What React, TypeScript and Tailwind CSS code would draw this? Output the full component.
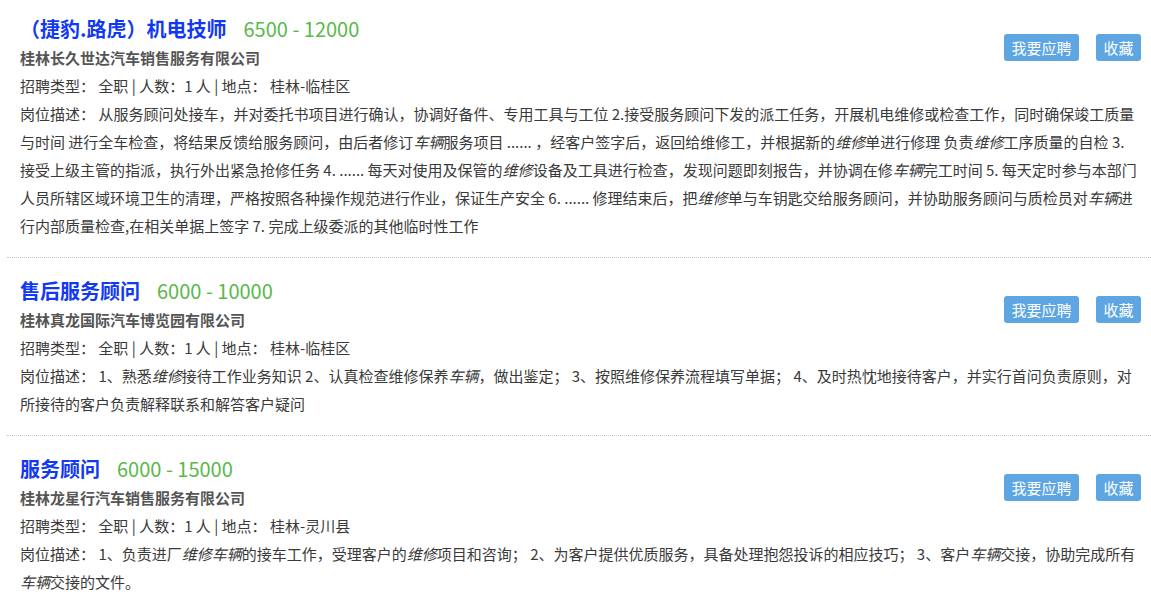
import React from "react";

type Seg = string | { em: string } | { br: true };

const jobs: {
  title: string;
  salary: string;
  company: string;
  place: string;
  desc: Seg[];
  first?: boolean;
}[] = [
  {
    title: "（捷豹.路虎）机电技师",
    salary: "6500 - 12000",
    company: "桂林长久世达汽车销售服务有限公司",
    place: "桂林-临桂区",
    first: true,
    desc: [
      "从服务顾问处接车，并对委托书项目进行确认，协调好备件、专用工具与工位 2.接受服务顾问下发的派工任务，开展机电维修或检查工作，同时确保竣工质量与时间 进行全车检查，将结果反馈给服务顾问，由后者修订",
      { em: "车辆" },
      "服务项目 ...... ，经客户签字后，返回给维修工，并根据新的",
      { em: "维修" },
      "单进行修理 负责",
      { em: "维修" },
      "工序质量的自检 3.",
      { br: true },
      "接受上级主管的指派，执行外出紧急抢修任务 4. ...... 每天对使用及保管的",
      { em: "维修" },
      "设备及工具进行检查，发现问题即刻报告，并协调在修",
      { em: "车辆" },
      "完工时间 5. 每天定时参与本部门",
      { br: true },
      "人员所辖区域环境卫生的清理，严格按照各种操作规范进行作业，保证生产安全 6. ...... 修理结束后，把",
      { em: "维修" },
      "单与车钥匙交给服务顾问，并协助服务顾问与质检员对",
      { em: "车辆" },
      "进",
      { br: true },
      "行内部质量检查,在相关单据上签字 7. 完成上级委派的其他临时性工作",
    ],
  },
  {
    title: "售后服务顾问",
    salary: "6000 - 10000",
    company: "桂林真龙国际汽车博览园有限公司",
    place: "桂林-临桂区",
    desc: [
      "1、熟悉",
      { em: "维修" },
      "接待工作业务知识 2、认真检查维修保养",
      { em: "车辆" },
      "，做出鉴定； 3、按照维修保养流程填写单据； 4、及时热忱地接待客户，并实行首问负责原则，对所接待的客户负责解释联系和解答客户疑问",
    ],
  },
  {
    title: "服务顾问",
    salary: "6000 - 15000",
    company: "桂林龙星行汽车销售服务有限公司",
    place: "桂林-灵川县",
    desc: [
      "1、负责进厂",
      { em: "维修车辆" },
      "的接车工作，受理客户的",
      { em: "维修" },
      "项目和咨询； 2、为客户提供优质服务，具备处理抱怨投诉的相应技巧； 3、客户",
      { em: "车辆" },
      "交接，协助完成所有",
      { em: "车辆" },
      "交接的文件。",
    ],
  },
];

export default function App() {
  return (
    <div
      className="w-[1151px] h-[600px] overflow-hidden bg-white text-[#333]"
      style={{ fontFamily: '"Noto Sans CJK SC", "Noto Sans", sans-serif' }}
    >
      {jobs.map((j, i) => (
        <div
          key={i}
          className={`ml-[7px] pl-[13px] pr-[10px] pb-[17px] border-b border-dotted border-[#c8c8c8] ${
            j.first ? "pt-[14px]" : "pt-[18px]"
          }`}
        >
          <div className="flex items-start justify-between">
            <div>
              <div className="flex items-center h-[30px] leading-[30px]">
                <span className="text-[20px] font-bold text-[#1239f2]">{j.title}</span>
                <span className="ml-[17px] text-[20px] text-[#58b84a]">{j.salary}</span>
              </div>
              <div className="h-[28px] leading-[28px] text-[15px] font-bold text-[#555]">{j.company}</div>
            </div>
            <div className="flex gap-[17px] mt-[20px]">
              <button className="w-[75px] h-[27px] rounded-[3px] bg-[#5da6e2] text-white text-[15px] leading-[27px] flex items-center justify-center">
                我要应聘
              </button>
              <button className="w-[45px] h-[27px] rounded-[3px] bg-[#5da6e2] text-white text-[15px] leading-[27px] flex items-center justify-center">
                收藏
              </button>
            </div>
          </div>
          <div className="text-[15px] leading-[28px] text-[#3a3a3a]">
            招聘类型： 全职 | 人数：1 人 | 地点： {j.place}
          </div>
          <div className="text-[15px] leading-[28px] text-[#3a3a3a]">
            岗位描述：{" "}
            {j.desc.map((s, k) =>
              typeof s === "string" ? (
                <React.Fragment key={k}>{s}</React.Fragment>
              ) : "br" in s ? (
                <br key={k} />
              ) : (
                <em key={k} className="italic">
                  {s.em}
                </em>
              )
            )}
          </div>
        </div>
      ))}
    </div>
  );
}
